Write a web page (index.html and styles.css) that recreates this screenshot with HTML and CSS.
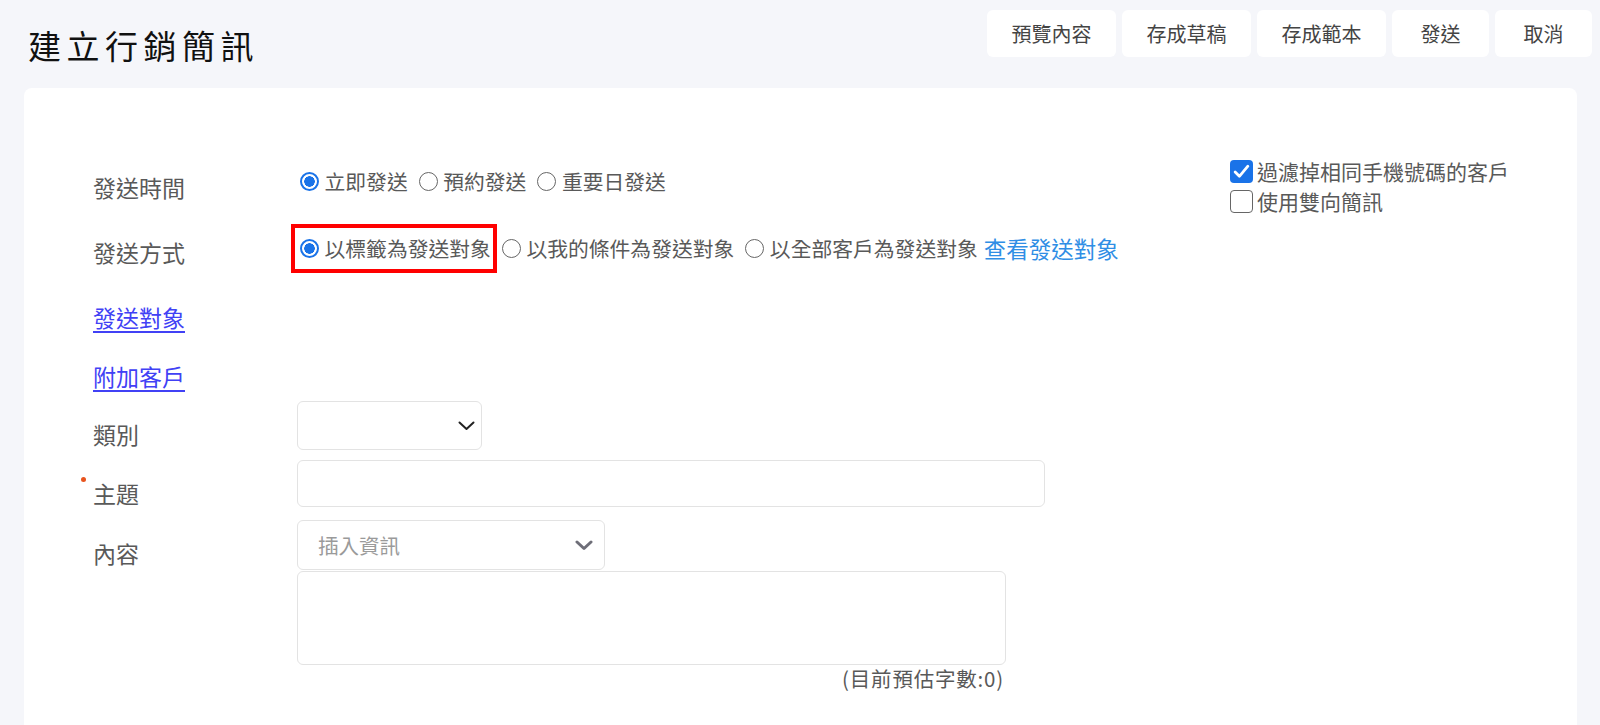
FILE: index.html
```html
<!DOCTYPE html>
<html lang="zh-Hant">
<head>
    <meta charset="UTF-8">
    <meta name="viewport" content="width=device-width, initial-scale=1.0">
    <title>建立行銷簡訊</title>
    <link rel="stylesheet" href="styles.css">
</head>
<body>
    <header class="page-header">
        <h1 class="page-title">建立行銷簡訊</h1>
        <div class="actions">
            <button class="btn">預覽內容</button>
            <button class="btn">存成草稿</button>
            <button class="btn">存成範本</button>
            <button class="btn">發送</button>
            <button class="btn">取消</button>
        </div>
    </header>

    <main class="card">
        <div class="form">
            <div class="row row-time">
                <div class="label">發送時間</div>
                <div class="radio-group up-6">
                    <label class="option"><span class="radio checked"></span>立即發送</label>
                    <label class="option"><span class="radio"></span>預約發送</label>
                    <label class="option"><span class="radio"></span>重要日發送</label>
                </div>
            </div>

            <div class="row row-mode">
                <div class="label">發送方式</div>
                <div class="radio-group up-4">
                    <label class="option marked"><span class="radio checked"></span>以標籤為發送對象</label>
                    <label class="option"><span class="radio"></span>以我的條件為發送對象</label>
                    <label class="option option-last"><span class="radio"></span>以全部客戶為發送對象</label>
                    <a class="view-link" href="#">查看發送對象</a>
                </div>
            </div>

            <div class="row row-target">
                <a class="label label-link" href="#">發送對象</a>
            </div>

            <div class="row row-extra">
                <a class="label label-link" href="#">附加客戶</a>
            </div>

            <div class="row row-field gap-10">
                <div class="label">類別</div>
                <div class="select select-small">
                    <svg width="17" height="10" viewBox="0 0 17 10"><path d="M1.5 1.5 L8.5 8 L15.5 1.5" fill="none" stroke="#222" stroke-width="2" stroke-linecap="round" stroke-linejoin="round"/></svg>
                </div>
            </div>

            <div class="row row-field gap-12">
                <div class="label"><span class="required">主題</span></div>
                <input class="text-input" type="text">
            </div>

            <div class="row row-field">
                <div class="label">內容</div>
                <div class="content-col">
                    <div class="select select-insert">
                        <span class="placeholder">插入資訊</span>
                        <svg width="18" height="11" viewBox="0 0 18 11"><path d="M2 2 L9 8.5 L16 2" fill="none" stroke="#6e6e78" stroke-width="3" stroke-linecap="round" stroke-linejoin="round"/></svg>
                    </div>
                    <textarea class="textarea"></textarea>
                    <div class="count">(目前預估字數:0)</div>
                </div>
            </div>
        </div>

        <div class="side">
            <label class="check-row">
                <span class="box checked">
                    <svg width="17" height="15" viewBox="0 0 16 14"><path d="M2 7.5 L6 11.5 L14 2" fill="none" stroke="#fff" stroke-width="2.6" stroke-linecap="round" stroke-linejoin="round"/></svg>
                </span>過濾掉相同手機號碼的客戶
            </label>
            <label class="check-row">
                <span class="box"></span>使用雙向簡訊
            </label>
        </div>
    </main>
</body>
</html>
```

FILE: styles.css
```css
body {
    margin: 0;
    background-color: #f5f6fa;
    font-family: "Noto Sans CJK TC", "Noto Sans", sans-serif;
    color: #595959;
}
.page-header {
    display: flex;
    justify-content: space-between;
    align-items: flex-start;
    height: 88px;
    box-sizing: border-box;
    padding: 10px 8px 0 28px;
}
.page-title {
    margin: 15px 0 0;
    font-size: 33px;
    line-height: 40px;
    font-weight: 400;
    letter-spacing: 5.5px;
    color: #111;
}
.actions {
    display: flex;
    gap: 6px;
}
.btn {
    height: 47px;
    min-width: 97px;
    padding: 0 24.5px;
    background-color: #fff;
    border: none;
    border-radius: 6px;
    font-family: inherit;
    font-size: 20px;
    color: #444;
    cursor: pointer;
}
.card {
    display: grid;
    grid-template-columns: 1137px 1fr;
    margin: 0 23px 0 24px;
    min-height: 640px;
    padding: 67px 0 0 69px;
    box-sizing: border-box;
    background-color: #fff;
    border-radius: 8px 8px 0 0;
}
.row {
    display: flex;
    align-items: center;
}
.row-time {
    height: 64px;
}
.row-mode {
    height: 65px;
}
.row-target {
    height: 66px;
}
.row-extra {
    height: 51px;
}
.row-field {
    align-items: flex-start;
}
.row-field .label {
    padding-top: 18px;
}
.gap-10 {
    margin-bottom: 10px;
}
.gap-12 {
    margin-bottom: 12px;
}
.label {
    width: 204px;
    flex: none;
    font-size: 23px;
    line-height: 30px;
    color: #595959;
}
.label-link {
    width: auto;
    color: #4141f5;
    text-decoration: underline;
    text-underline-offset: 4px;
}
.required {
    position: relative;
}
.required::before {
    content: "";
    position: absolute;
    left: -12px;
    top: 1px;
    width: 5px;
    height: 5px;
    border-radius: 50%;
    background-color: #e8541e;
}
.radio-group {
    display: flex;
    align-items: center;
}
.up-6 {
    margin-bottom: 12px;
}
.up-4 {
    margin-bottom: 7px;
}
.option {
    display: inline-flex;
    align-items: center;
    gap: 5.5px;
    margin-right: 8px;
    font-size: 20.8px;
    line-height: 30px;
    color: #595959;
}
.option-last {
    margin-right: 6px;
}
.radio {
    width: 19px;
    height: 19px;
    margin-left: 3px;
    box-sizing: border-box;
    border: 1.5px solid #666;
    border-radius: 50%;
}
.radio.checked {
    border: 2px solid #1a73e8;
    background: radial-gradient(circle, #1a73e8 0 5px, #fff 5.5px);
}
.marked {
    position: relative;
}
.marked::after {
    content: "";
    position: absolute;
    left: -6px;
    right: -6px;
    top: -9.5px;
    bottom: -9.5px;
    border: 4px solid #f00;
}
.view-link {
    font-size: 22.5px;
    line-height: 30px;
    color: #2f8ee5;
    text-decoration: none;
}
.select {
    display: flex;
    align-items: center;
    box-sizing: border-box;
    border: 1px solid #e3e3e3;
    border-radius: 6px;
}
.select-small {
    width: 185px;
    height: 49px;
    justify-content: flex-end;
    padding-right: 6px;
}
.select-insert {
    width: 308px;
    height: 50px;
    justify-content: space-between;
    padding: 0 11px 0 20px;
}
.placeholder {
    font-size: 20.5px;
    color: #9a9a9a;
}
.text-input {
    width: 748px;
    height: 47px;
    box-sizing: border-box;
    border: 1px solid #e3e3e3;
    border-radius: 6px;
    outline: none;
}
.content-col {
    display: flex;
    flex-direction: column;
    width: 709px;
}
.textarea {
    width: 709px;
    height: 94px;
    margin-top: 1px;
    box-sizing: border-box;
    border: 1px solid #e3e3e3;
    border-radius: 6px;
    resize: none;
    outline: none;
}
.count {
    text-align: right;
    padding-right: 2px;
    font-size: 20.5px;
    line-height: 27px;
    letter-spacing: 0.8px;
    color: #595959;
}
.side {
    margin-top: 1px;
}
.check-row {
    display: flex;
    align-items: center;
    gap: 4px;
    font-size: 21px;
    line-height: 30px;
    color: #595959;
}
.box {
    display: flex;
    align-items: center;
    justify-content: center;
    width: 23px;
    height: 23px;
    box-sizing: border-box;
    border: 1.5px solid #666;
    border-radius: 4px;
}
.box.checked {
    border: none;
    background-color: #1a73e8;
}
```
